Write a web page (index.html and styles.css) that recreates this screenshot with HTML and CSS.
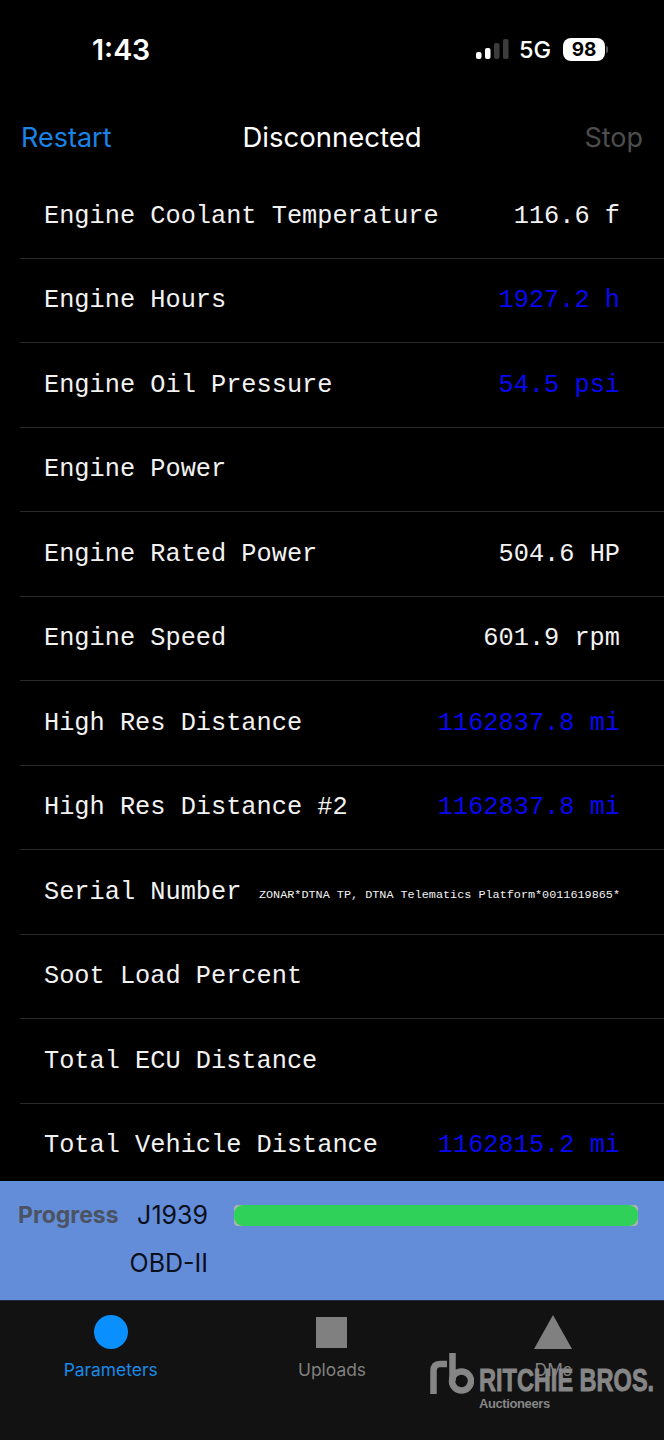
FILE: index.html
```html
<!DOCTYPE html>
<html lang="en">
<head>
    <meta charset="UTF-8">
    <meta name="viewport" content="width=device-width, initial-scale=1.0">
    <title>Parameters</title>
    <link rel="stylesheet" href="styles.css">
</head>
<body>
    <div class="screen">
        <div class="status-bar">
            <span class="time">1:43</span>
            <div class="status-right">
                <svg class="signal" width="33" height="20" viewBox="0 0 33 20">
                    <rect x="0" y="13" width="5.5" height="7" rx="2" fill="#fff"/>
                    <rect x="9" y="9" width="5.5" height="11" rx="2" fill="#fff"/>
                    <rect x="18" y="4" width="5.5" height="16" rx="2" fill="#3c3c3c"/>
                    <rect x="27" y="0" width="5.5" height="20" rx="2" fill="#3c3c3c"/>
                </svg>
                <span class="network">5G</span>
                <span class="battery">98</span>
                <span class="battery-nub"></span>
            </div>
        </div>

        <div class="nav-bar">
            <span class="nav-left">Restart</span>
            <span class="nav-title">Disconnected</span>
            <span class="nav-right">Stop</span>
        </div>

        <div class="param-list">
            <div class="param-row"><span>Engine Coolant Temperature</span><span>116.6 f</span></div>
            <div class="param-row"><span>Engine Hours</span><span class="stale">1927.2 h</span></div>
            <div class="param-row"><span>Engine Oil Pressure</span><span class="stale">54.5 psi</span></div>
            <div class="param-row"><span>Engine Power</span></div>
            <div class="param-row"><span>Engine Rated Power</span><span>504.6 HP</span></div>
            <div class="param-row"><span>Engine Speed</span><span>601.9 rpm</span></div>
            <div class="param-row"><span>High Res Distance</span><span class="stale">1162837.8 mi</span></div>
            <div class="param-row"><span>High Res Distance #2</span><span class="stale">1162837.8 mi</span></div>
            <div class="param-row"><span>Serial Number</span><span class="small-value">ZONAR*DTNA TP, DTNA Telematics Platform*0011619865*</span></div>
            <div class="param-row"><span>Soot Load Percent</span></div>
            <div class="param-row"><span>Total ECU Distance</span></div>
            <div class="param-row"><span>Total Vehicle Distance</span><span class="stale">1162815.2 mi</span></div>
        </div>

        <div class="progress-panel">
            <div class="progress-line">
                <span class="progress-label">Progress</span>
                <span class="protocol">J1939</span>
                <div class="progress-track"><div class="progress-fill"></div></div>
            </div>
            <div class="progress-line">
                <span class="progress-label"></span>
                <span class="protocol">OBD-II</span>
            </div>
        </div>

        <div class="tab-bar">
            <div class="tab active">
                <div class="tab-icon"><div class="circle"></div></div>
                <span>Parameters</span>
            </div>
            <div class="tab">
                <div class="tab-icon"><div class="square"></div></div>
                <span>Uploads</span>
            </div>
            <div class="tab">
                <div class="tab-icon"><div class="triangle"></div></div>
                <span>DMs</span>
            </div>
            <div class="watermark">
                <svg class="rb-mark" width="44" height="42" viewBox="0 0 44 42">
                    <path d="M3.5 41V18Q3.5 11 10 11H17" fill="none" stroke="#8a8a8a" stroke-width="6.5"/>
                    <path d="M22.5 0V28" fill="none" stroke="#8a8a8a" stroke-width="6.5"/>
                    <circle cx="31.5" cy="28" r="9.5" fill="none" stroke="#8a8a8a" stroke-width="6.5"/>
                </svg>
                <div class="brand">
                    <span class="brand-name">RITCHIE BROS.</span>
                    <span class="brand-sub">Auctioneers</span>
                </div>
            </div>
        </div>
    </div>
</body>
</html>
```

FILE: styles.css
```css
html, body {
    margin: 0;
    background-color: #000;
}
.screen {
    width: 664px;
    height: 1440px;
    display: flex;
    flex-direction: column;
    overflow: hidden;
    font-family: Inter, "Liberation Sans", sans-serif;
    color: #fff;
}

/* status bar */
.status-bar {
    height: 100px;
    flex: none;
    display: flex;
    align-items: center;
    justify-content: space-between;
    padding: 0 56px 2px 92px;
    box-sizing: border-box;
}
.time {
    font-size: 28.5px;
    font-weight: 600;
}
.status-right {
    display: flex;
    align-items: center;
}
.signal {
    margin-right: 10px;
}
.network {
    font-size: 23.5px;
    font-weight: 500;
    margin-right: 12px;
}
.battery {
    width: 42px;
    height: 23px;
    border-radius: 8px;
    background-color: #fff;
    color: #000;
    font-size: 19px;
    font-weight: 700;
    line-height: 23px;
    text-align: center;
}
.battery-nub {
    width: 2px;
    height: 7px;
    margin-left: 1px;
    background-color: #555;
    border-radius: 0 2px 2px 0;
}

/* nav */
.nav-bar {
    height: 74px;
    flex: none;
    display: flex;
    align-items: center;
    padding: 0 21px;
    font-size: 27px;
}
.nav-left,
.nav-right {
    flex: 1;
}
.nav-left {
    color: #1a84e6;
}
.nav-title {
    font-size: 27.5px;
}
.nav-right {
    color: #4d4d4d;
    text-align: right;
}

/* parameter rows */
.param-list {
    flex: 1;
    min-height: 0;
    overflow: hidden;
    margin-left: 20px;
    font-family: "Liberation Mono", "Courier New", monospace;
    font-size: 25.3px;
    color: #f2f2f2;
}
.param-row {
    height: 84.5px;
    box-sizing: border-box;
    display: flex;
    align-items: center;
    justify-content: space-between;
    padding: 1px 44px 0 24px;
    border-bottom: 1px solid #2a2a2a;
    white-space: nowrap;
}
.stale {
    color: #0808f0;
}
.small-value {
    font-size: 11.8px;
    padding-top: 6px;
}

/* progress */
.progress-panel {
    height: 119px;
    flex: none;
    box-sizing: border-box;
    padding-top: 10px;
    background-color: #638dd8;
    color: #0a0f1c;
}
.progress-line {
    height: 48px;
    display: flex;
    align-items: center;
}
.progress-label {
    width: 100px;
    margin-left: 18px;
    font-size: 23px;
    font-weight: 700;
    color: #4b5362;
}
.protocol {
    width: 90px;
    font-size: 25px;
    text-align: right;
}
.progress-track {
    width: 404px;
    height: 21px;
    margin-left: 26px;
    border-radius: 4px;
    background-color: #b0b0b0;
}
.progress-fill {
    height: 100%;
    border-radius: 9px;
    background-color: #30d158;
}

/* tabs */
.tab-bar {
    position: relative;
    height: 140px;
    flex: none;
    display: grid;
    grid-template-columns: repeat(3, 1fr);
    background-color: #121212;
    border-top: 1px solid #1d2a40;
    box-sizing: border-box;
}
.tab {
    display: flex;
    flex-direction: column;
    align-items: center;
    padding-top: 14px;
    color: #808080;
    font-size: 17.4px;
}
.tab.active {
    color: #1a8ae8;
}
.tab-icon {
    height: 34px;
    margin-bottom: 10px;
    display: flex;
    align-items: center;
}
.circle {
    width: 34px;
    height: 34px;
    border-radius: 50%;
    background-color: #0a8fff;
}
.square {
    width: 31px;
    height: 31px;
    background-color: #808080;
}
.triangle {
    width: 0;
    height: 0;
    border-left: 19px solid transparent;
    border-right: 19px solid transparent;
    border-bottom: 34px solid #808080;
}

/* logo sits over the last tab */
.watermark {
    position: absolute;
    left: 430px;
    top: 52px;
    display: flex;
    align-items: flex-start;
    opacity: 0.97;
}
.rb-mark {
    flex: none;
}
.brand {
    margin-left: 5px;
    padding-top: 12px;
    display: flex;
    flex-direction: column;
    color: #8a8a8a;
    white-space: nowrap;
}
.brand-name {
    font-family: "Liberation Sans", sans-serif;
    font-size: 32px;
    line-height: 31px;
    font-weight: 700;
    -webkit-text-stroke: 1px #8a8a8a;
    transform: scaleX(0.735);
    transform-origin: left center;
}
.brand-sub {
    font-family: "Liberation Sans", sans-serif;
    font-size: 13px;
    line-height: 16px;
    font-weight: 700;
    letter-spacing: -0.4px;
}
```
